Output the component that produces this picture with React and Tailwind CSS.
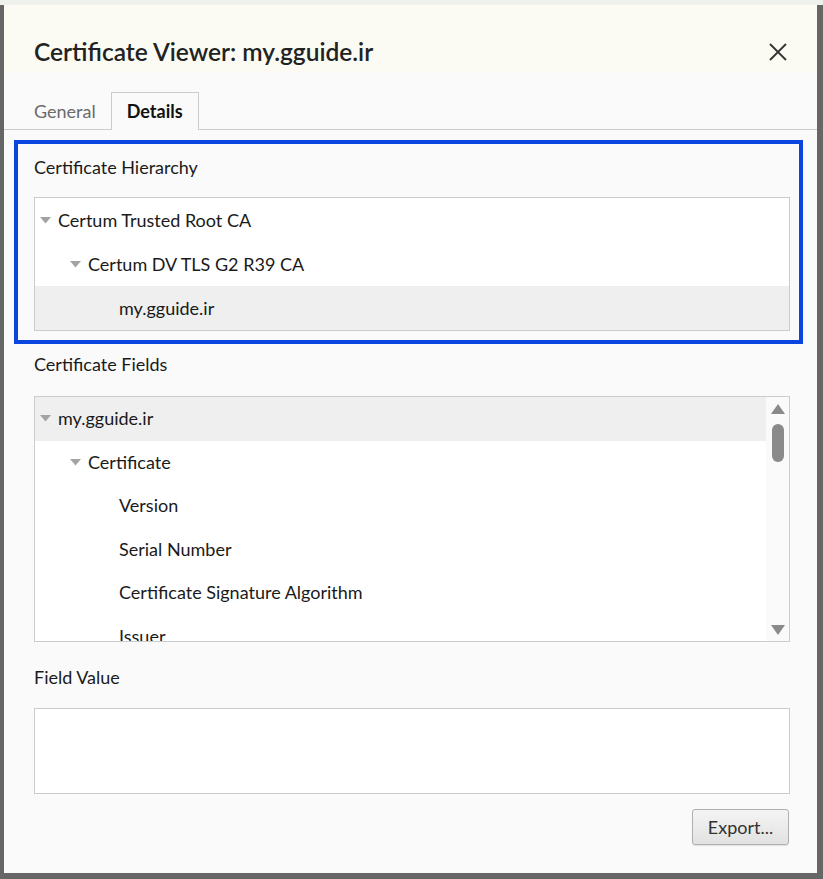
function Caret() {
  return (
    <svg width="11" height="7" viewBox="0 0 11 7" className="shrink-0">
      <path d="M0 0 L11 0 L5.5 6.5 Z" fill="#a3a3a3" />
    </svg>
  );
}

function TreeRow({ level, label, expanded, selected, h = 'h-[44px]' }) {
  const pad = ['pl-[5px]', 'pl-[35px]', 'pl-[84px]'][level];
  return (
    <div className={`flex ${h} items-center gap-[7px] ${pad} ${selected ? 'bg-[#efefef]' : ''}`}>
      {expanded && <Caret />}
      <span>{label}</span>
    </div>
  );
}

export default function App() {
  const hierarchy = [
    { level: 0, label: 'Certum Trusted Root CA', expanded: true },
    { level: 1, label: 'Certum DV TLS G2 R39 CA', expanded: true },
    { level: 2, label: 'my.gguide.ir', selected: true },
  ];

  const fields = [
    { level: 0, label: 'my.gguide.ir', expanded: true, selected: true },
    { level: 1, label: 'Certificate', expanded: true },
    { level: 2, label: 'Version' },
    { level: 2, label: 'Serial Number' },
    { level: 2, label: 'Certificate Signature Algorithm' },
    { level: 2, label: 'Issuer' },
  ];

  return (
    <div className="h-[879px] w-[823px] bg-[#666] border-t-[5px] border-t-[#eef1ec] pl-[4px] pr-[6px] pb-[6px] font-['Lato',sans-serif] text-[18px] text-[#1a1a1a]">
      <div className="flex h-full flex-col bg-[#fafafa]">
        {/* header */}
        <div className="flex h-[67px] items-end justify-between bg-[#fbfbf3] pl-[30px] pr-[30px] pb-[1px]">
          <h1 className="text-[24.5px] font-semibold text-[#222]">Certificate Viewer: my.gguide.ir</h1>
          <svg width="18" height="18" viewBox="0 0 18 18" className="mb-[10px]">
            <path d="M1 1 L17 17 M17 1 L1 17" stroke="#333" strokeWidth="1.8" />
          </svg>
        </div>

        {/* tabs */}
        <div className="mt-[21px] flex h-[37px] items-end border-b border-[#cccccc]">
          <div className="flex h-full items-center pl-[30px] pr-[15px] text-[#6a6a6a]">General</div>
          <div className="-mb-px flex h-[38px] items-center border border-b-0 border-[#cccccc] bg-[#fafafa] px-[15px] font-bold text-[#111]">
            Details
          </div>
        </div>

        {/* hierarchy (highlighted) */}
        <div className="mt-[10px] ml-[10px] mr-[14px] border-[4px] border-[#0a45e0] pl-[16px] pr-[9px] pt-[7px] pb-[9px]">
          <div className="flex h-[32px] items-center">Certificate Hierarchy</div>
          <div className="mt-[14px] border border-[#cccccc] bg-white">
            {hierarchy.map((r) => (
              <TreeRow key={r.label + r.level} {...r} />
            ))}
          </div>
        </div>

        <div className="pl-[30px] pr-[27px]">
          <div className="mt-[8px] flex h-[24px] items-center">Certificate Fields</div>

          <div className="relative mt-[20px] h-[246px] overflow-hidden border border-[#cccccc] bg-white">
            <div className="mr-[23px]">
              {fields.map((r) => (
                <TreeRow key={r.label + r.level} {...r} h="h-[43.5px]" />
              ))}
            </div>
            {/* scrollbar */}
            <div className="absolute top-0 right-0 bottom-0 flex w-[23px] flex-col items-center bg-[#fafafa]">
              <svg width="14" height="10" viewBox="0 0 14 10" className="mt-[7px]">
                <path d="M7 0 L14 10 L0 10 Z" fill="#8a8a8a" />
              </svg>
              <div className="mt-[10px] h-[38px] w-[12px] rounded-full bg-[#8a8a8a]" />
              <div className="flex-1" />
              <svg width="14" height="10" viewBox="0 0 14 10" className="mb-[6px]">
                <path d="M0 0 L14 0 L7 10 Z" fill="#8a8a8a" />
              </svg>
            </div>
          </div>

          <div className="mt-[23px] flex h-[24px] items-center">Field Value</div>
          <div className="mt-[19px] h-[86px] border border-[#cccccc] bg-white" />

          <div className="mt-[15px] flex justify-end">
            <button className="mr-[1px] h-[36px] w-[97px] rounded-[3px] border border-[#b0b0b0] bg-gradient-to-b from-[#f4f4f4] to-[#e2e2e2] text-[#333] shadow-[0_1px_1px_rgba(0,0,0,0.1)]">
              Export...
            </button>
          </div>
        </div>
      </div>
    </div>
  );
}
